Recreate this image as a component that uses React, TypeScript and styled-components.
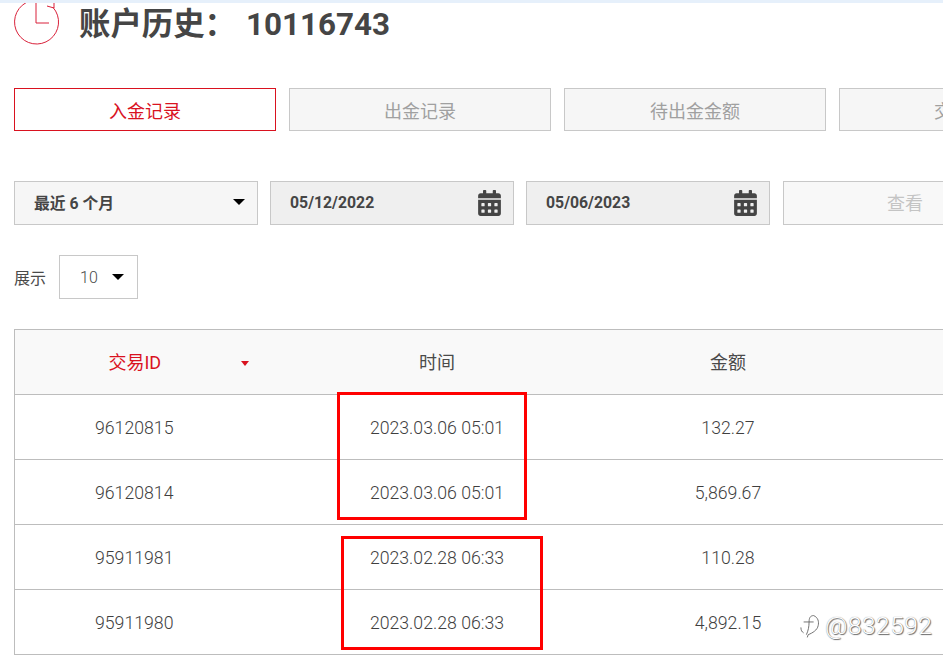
import React from "react";
import styled, {createGlobalStyle} from "styled-components";
import {FaCalendarAlt} from "react-icons/fa";

const GlobalStyle = createGlobalStyle`
  html, body {
    margin: 0;
    padding: 0;
    background: #fff;
    overflow: hidden;
  }

  body {
    font-family: Roboto, "Noto Sans CJK SC", sans-serif;
    color: #4a4a4a;
  }
`;

const Page = styled.div`
  position: relative;
  width: 943px;
  height: 666px;
  overflow: hidden;
  background: #fff;
`;

const TopStrip = styled.div`
  height: 3px;
  background: #e6f0fb;
`;

const TitleRow = styled.div`
  height: 85px;
  padding-left: 14px;
  display: flex;
  align-items: flex-start;
  gap: 18px;
  overflow: hidden;
`;

const ClockIcon = styled.svg`
  width: 47px;
  height: 44px;
  flex-shrink: 0;
`;

const Title = styled.h1`
  margin: 2px 0 0;
  font-size: 31.4px;
  line-height: 40px;
  font-weight: 700;
  color: #454545;
  white-space: nowrap;
`;

const AccountNo = styled.span`
  margin-left: 10px;
`;

const Tabs = styled.div`
  display: flex;
  gap: 13px;
  padding-left: 14px;
`;

const Tab = styled.div<{$active?: boolean}>`
  width: 262px;
  height: 43px;
  flex-shrink: 0;
  box-sizing: border-box;
  display: flex;
  align-items: center;
  justify-content: center;
  font-size: 18px;
  background: ${p => (p.$active ? "#fff" : "#f6f6f6")};
  color: ${p => (p.$active ? "#d9121f" : "#a0a0a0")};
  border: 1px solid ${p => (p.$active ? "#d9121f" : "#c8c8c8")};
`;

const Filters = styled.div`
  display: flex;
  gap: 12px;
  padding: 50px 0 0 14px;
`;

const Field = styled.div<{$bg: string}>`
  width: 244px;
  height: 44px;
  flex-shrink: 0;
  box-sizing: border-box;
  padding: 0 12px 2px 19px;
  display: flex;
  align-items: center;
  justify-content: space-between;
  background: ${p => p.$bg};
  border: 1px solid #c8c8c8;
  font-size: 15.8px;
  font-weight: 700;
  color: #454545;

  svg {
    width: 23px;
    height: 26px;
    margin-top: 2px;
    color: #454545;
  }
`;

const Caret = styled.span`
  width: 0;
  height: 0;
  border-left: 6px solid transparent;
  border-right: 6px solid transparent;
  border-top: 6px solid #000;
`;

const ViewButton = styled.div`
  width: 300px;
  height: 44px;
  margin-left: 1px;
  flex-shrink: 0;
  box-sizing: border-box;
  padding: 0 0 2px 103px;
  display: flex;
  align-items: center;
  font-size: 18px;
  color: #c4c4c4;
  background: #f8f8f8;
  border: 1px solid #c8c8c8;
`;

const PageSize = styled.div`
  display: flex;
  align-items: center;
  gap: 13px;
  padding: 30px 0 0 14px;
  font-size: 16px;
`;

const SizeSelect = styled.div`
  width: 79px;
  height: 44px;
  box-sizing: border-box;
  padding: 0 13px 0 20px;
  display: flex;
  align-items: center;
  justify-content: space-between;
  border: 1px solid #c8c8c8;
  font-size: 16px;
  font-weight: 300;
`;

const Table = styled.table`
  margin: 30px 0 0 14px;
  width: 1100px;
  table-layout: fixed;
  border-collapse: collapse;
  font-size: 17.7px;
`;

const HeadCell = styled.th<{$active?: boolean}>`
  height: 65px;
  padding: 0 0 2px;
  box-sizing: border-box;
  font-weight: 400;
  font-size: 18px;
  text-align: center;
  background: #f9f9f9;
  color: ${p => (p.$active ? "#d9121f" : "#4a4a4a")};
  border-top: 1px solid #bdbdbd;
  border-bottom: 1px solid #bdbdbd;
  &:first-child {
    border-left: 1px solid #bdbdbd;
    padding-right: 37px;
    position: relative;
  }
`;

const Cell = styled.td`
  height: 65px;
  padding: 1px 0 0;
  box-sizing: border-box;
  text-align: center;
  font-weight: 300;
  color: #3f3f3f;
  border-bottom: 1px solid #bdbdbd;
  &:first-child {
    border-left: 1px solid #bdbdbd;
    padding-right: 38px;
  }
`;

const SortMark = styled.span`
  position: absolute;
  left: 226px;
  top: 31px;
  width: 0;
  height: 0;
  border-left: 4px solid transparent;
  border-right: 4px solid transparent;
  border-top: 5px solid #d9121f;
`;

// hand drawn annotation boxes lying over the table
const Marker = styled.div<{$x: number; $y: number; $w: number; $h: number}>`
  position: absolute;
  left: ${p => p.$x}px;
  top: ${p => p.$y}px;
  width: ${p => p.$w}px;
  height: ${p => p.$h}px;
  box-sizing: border-box;
  border: 3px solid #f00;
`;

const Watermark = styled.div`
  position: absolute;
  left: 800px;
  top: 611px;
  display: flex;
  align-items: center;
  gap: 5px;
  font-size: 24.5px;
  line-height: 30px;
  font-weight: 300;
  letter-spacing: 0.5px;
  color: #fff;
  text-shadow: 1px 1px 1px #666, 0 0 1px #888;

  svg {
    width: 20px;
    height: 25px;
  }
`;

const rows = [
    {id: "96120815", time: "2023.03.06 05:01", amount: "132.27"},
    {id: "96120814", time: "2023.03.06 05:01", amount: "5,869.67"},
    {id: "95911981", time: "2023.02.28 06:33", amount: "110.28"},
    {id: "95911980", time: "2023.02.28 06:33", amount: "4,892.15"},
];

const App = () => {
    return (
        <Page>
            <GlobalStyle/>
            <TopStrip/>
            <TitleRow>
                <ClockIcon viewBox="0 0 47 44" fill="none" stroke="#d9213a" strokeWidth="1">
                    <path d="M39 4.4 A22 22 0 1 1 12 -0.3"/>
                    <path d="M40 5 L33 3 M40 5 L40 0"/>
                    <path d="M22 0 V20 H35"/>
                </ClockIcon>
                <Title>账户历史：<AccountNo>10116743</AccountNo></Title>
            </TitleRow>
            <Tabs>
                <Tab $active>入金记录</Tab>
                <Tab>出金记录</Tab>
                <Tab>待出金金额</Tab>
                <Tab>交易记录</Tab>
            </Tabs>
            <Filters>
                <Field $bg="#f6f6f6">最近 6 个月<Caret/></Field>
                <Field $bg="#efefef">05/12/2022<FaCalendarAlt/></Field>
                <Field $bg="#efefef">05/06/2023<FaCalendarAlt/></Field>
                <ViewButton>查看</ViewButton>
            </Filters>
            <PageSize>
                展示
                <SizeSelect>10<Caret/></SizeSelect>
            </PageSize>
            <Table>
                <colgroup>
                    <col style={{width: 277}}/>
                    <col style={{width: 291}}/>
                    <col style={{width: 291}}/>
                    <col/>
                </colgroup>
                <thead>
                    <tr>
                        <HeadCell $active>交易ID<SortMark/></HeadCell>
                        <HeadCell>时间</HeadCell>
                        <HeadCell>金额</HeadCell>
                        <HeadCell/>
                    </tr>
                </thead>
                <tbody>
                    {rows.map(row => (
                        <tr key={row.id}>
                            <Cell>{row.id}</Cell>
                            <Cell>{row.time}</Cell>
                            <Cell>{row.amount}</Cell>
                            <Cell/>
                        </tr>
                    ))}
                </tbody>
            </Table>
            <Marker $x={337} $y={392} $w={190} $h={128}/>
            <Marker $x={341} $y={536} $w={202} $h={114}/>
            <Watermark>
                <svg viewBox="0 0 22 26" fill="none" stroke="#666" strokeWidth="1">
                    <path d="M15 1 C11 1 10 4 10 8 C10 13 9 18 7 22"/>
                    <path d="M4 8 H15"/>
                    <path d="M15 1 C20 3 21 8 20 12 C19 17 14 20 9 22 L8 25"/>
                    <path d="M1 14 C1 17 2 19 4 20"/>
                </svg>
                @832592
            </Watermark>
        </Page>
    );
};

export default App;
